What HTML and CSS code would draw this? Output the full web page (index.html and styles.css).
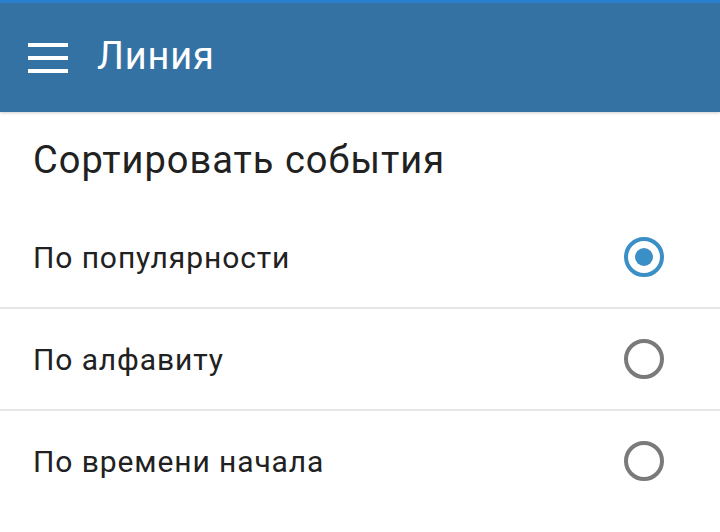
FILE: index.html
```html
<!DOCTYPE html>
<html lang="ru">
<head>
  <meta charset="UTF-8" />
  <meta name="viewport" content="width=device-width, initial-scale=1.0"/>
  <title>Линия</title>
  <link rel="stylesheet" href="styles.css">
</head>
<body>
  <header class="app-bar">
    <button class="menu-btn" aria-label="Меню">
      <span></span><span></span><span></span>
    </button>
    <h1>Линия</h1>
  </header>

  <section class="sort-panel">
    <h2>Сортировать события</h2>
    <label class="sort-option">
      <span>По популярности</span>
      <input type="radio" name="sort" checked />
      <i class="radio"></i>
    </label>
    <label class="sort-option">
      <span>По алфавиту</span>
      <input type="radio" name="sort" />
      <i class="radio"></i>
    </label>
    <label class="sort-option">
      <span>По времени начала</span>
      <input type="radio" name="sort" />
      <i class="radio"></i>
    </label>
  </section>
</body>
</html>
```

FILE: styles.css
```css
:root {
  --color-bar: #3572a4;
  --color-bar-top: #2a7fcc;
  --color-accent: #3a8fc6;
  --color-text: #212121;
  --color-divider: #e6e6e6;
  --color-off: #7a7a7a;
}

body {
  margin: 0;
  padding: 0;
  font-family: Roboto, 'Noto Sans', sans-serif;
  background: #fff;
  color: var(--color-text);
}

.app-bar {
  height: 109px;
  background: var(--color-bar);
  border-top: 3px solid var(--color-bar-top);
  box-shadow: 0 1px 3px rgba(0, 0, 0, 0.2);
  display: flex;
  align-items: center;
  padding-left: 28px;
}

.menu-btn {
  width: 40px;
  padding: 0;
  margin: 0 29px 0 0;
  border: none;
  background: none;
  display: flex;
  flex-direction: column;
  gap: 9px;
}

.menu-btn span {
  height: 4px;
  background: #fff;
}

.app-bar h1 {
  margin: 0;
  font-size: 38px;
  font-weight: 400;
  letter-spacing: 0.8px;
  color: #fff;
  padding-bottom: 4px;
}

.sort-panel h2 {
  margin: 0;
  padding: 26px 0 25px 33px;
  font-size: 38px;
  font-weight: 400;
  letter-spacing: 1px;
  line-height: 44px;
}

.sort-option {
  height: 100px;
  display: flex;
  align-items: center;
  justify-content: space-between;
  padding: 0 56px 0 33px;
  font-size: 30px;
  letter-spacing: 0.9px;
  border-bottom: 2px solid var(--color-divider);
  cursor: pointer;
}

.sort-option:last-child {
  border-bottom: none;
}

.sort-option input {
  display: none;
}

.radio {
  width: 32px;
  height: 32px;
  border: 4px solid var(--color-off);
  border-radius: 50%;
  position: relative;
}

input:checked + .radio {
  border-color: var(--color-accent);
}

input:checked + .radio::after {
  content: "";
  position: absolute;
  top: 7px;
  left: 7px;
  width: 18px;
  height: 18px;
  border-radius: 50%;
  background: var(--color-accent);
}
```
